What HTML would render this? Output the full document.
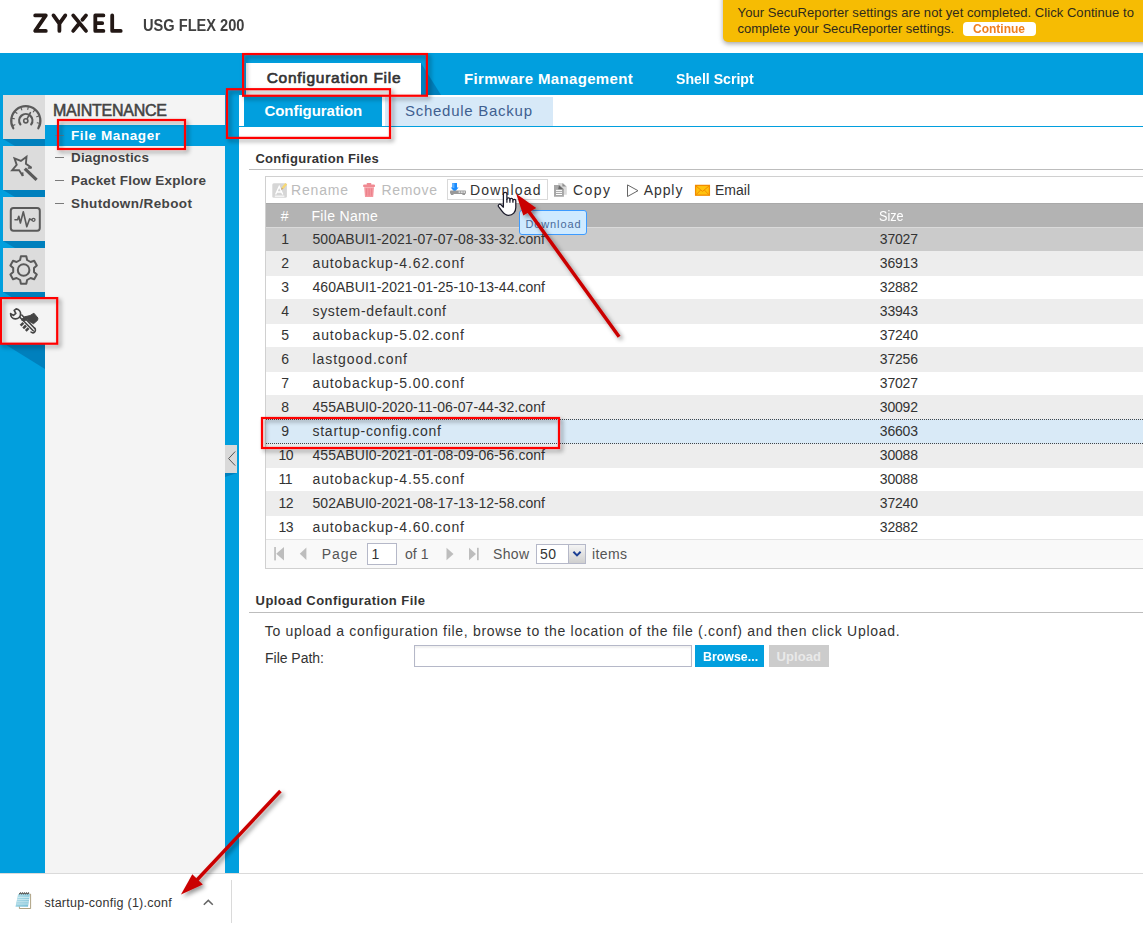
<!DOCTYPE html>
<html><head><meta charset="utf-8"><title>ZyXEL USG FLEX 200</title>
<style>
html,body{margin:0;padding:0;background:#fff;}
body{font-family:"Liberation Sans",sans-serif;overflow:hidden;}
#page{position:relative;width:1143px;height:929px;overflow:hidden;background:#fff;}
#page div,#page svg{position:absolute;}
.t{position:absolute;white-space:pre;line-height:20px;height:20px;}

</style></head>
<body>
<div id="page">
<div style="left:0px;top:53px;width:1143px;height:42px;background:#019fde;"></div>
<div style="left:0px;top:95px;width:45px;height:778px;background:#019fde;"></div>
<div style="left:45px;top:95px;width:180px;height:778px;background:#f4f4f4;"></div>
<div style="left:225px;top:95px;width:14px;height:778px;background:#019fde;"></div>
<svg style="left:30px;top:10px" width="100" height="28" viewBox="30 10 100 28" fill="none" stroke="#231815" stroke-width="3.8" stroke-linecap="round" stroke-linejoin="round">
<path d="M35.2 15.4H45.8L35.2 30.9H45.8"/>
<path d="M53.5 15.4L59.4 23.6L65.3 15.4M59.4 23.6V30.9"/>
<path d="M73.2 15.4L86 30.9M73.2 30.9L78.6 24.3"/>
<path d="M86 15.4L82.4 19.8"/>
<path d="M103.4 15.4H95.3V30.9H103.4M95.3 23.15H102.2"/>
<path d="M112.2 15.4V30.9H120.7"/>
</svg>
<div style="left:723px;top:-6px;width:426px;height:48.3px;background:#f6bc03;border-radius:0 0 0 5px;box-shadow:0 2px 5px rgba(0,0,0,.35);"></div>
<div style="left:963px;top:22px;width:73px;height:14px;background:#fff;border-radius:4px;"></div>
<svg style="left:421px;top:63px" width="22" height="32"><path d="M0 0L20 32H0Z" fill="#0080bd"/></svg>
<div style="left:245.6px;top:62.8px;width:175.4px;height:33.2px;background:#fff;"></div>
<div style="left:239px;top:126px;width:904px;height:1px;background:#019fde;"></div>
<div style="left:244px;top:96px;width:138px;height:30px;background:#019fde;"></div>
<div style="left:385px;top:97px;width:168px;height:29px;background:#d7e9f8;"></div>
<svg style="left:3px;top:139px" width="42" height="7"><path d="M0 0H42V7H12Z" fill="#0080bd"/></svg>
<div style="left:3.4px;top:95.2px;width:41.6px;height:43.7px;background:#dcdcdc;"></div>
<svg style="left:3px;top:190px" width="42" height="7"><path d="M0 0H42V7H12Z" fill="#0080bd"/></svg>
<div style="left:3.4px;top:146.2px;width:41.6px;height:43.7px;background:#dcdcdc;"></div>
<svg style="left:3px;top:241px" width="42" height="7"><path d="M0 0H42V7H12Z" fill="#0080bd"/></svg>
<div style="left:3.4px;top:197.2px;width:41.6px;height:43.7px;background:#dcdcdc;"></div>
<svg style="left:3px;top:292px" width="42" height="7"><path d="M0 0H42V7H12Z" fill="#0080bd"/></svg>
<div style="left:3.4px;top:248.2px;width:41.6px;height:43.7px;background:#dcdcdc;"></div>
<svg style="left:3px;top:343px" width="42" height="27"><path d="M0 0H42V26Z" fill="#0080bd"/></svg>
<div style="left:2px;top:299px;width:43px;height:44px;background:#f4f4f4;"></div>
<div style="left:45px;top:125px;width:194px;height:21px;background:#019fde;"></div>
<div style="left:55px;top:135px;width:9px;height:1px;background:#4f7f96;"></div>
<div style="left:55px;top:157px;width:9px;height:1px;background:#7a7a7a;"></div>
<div style="left:55px;top:180px;width:9px;height:1px;background:#7a7a7a;"></div>
<div style="left:55px;top:203px;width:9px;height:1px;background:#7a7a7a;"></div>
<svg style="left:225px;top:473px" width="12" height="5"><path d="M0 0H12L0 4Z" fill="#0080bd"/></svg>
<div style="left:225px;top:445px;width:12px;height:28px;background:#d9d9d9;"></div>
<svg style="left:225px;top:445px" width="12" height="28"><path d="M10.2 6.5L3.6 13.6L10.2 20.6" fill="none" stroke="#555" stroke-width="1"/></svg>
<div style="left:249px;top:169px;width:894px;height:1px;background:#bdbdbd;"></div>
<div style="left:249px;top:612px;width:894px;height:1px;background:#bdbdbd;"></div>
<div style="left:265px;top:176px;width:880px;height:393px;background:#fff;border:1px solid #d0d0d0;box-sizing:border-box;"></div>
<div style="left:266px;top:540px;width:877px;height:28px;background:#f9f9f9;"></div>
<div style="left:266px;top:203.3px;width:877px;height:23.7px;background:#b3b3b3;"></div>
<div style="left:266px;top:227px;width:877px;height:24px;background:#cbcbcb;"></div>
<div style="left:266px;top:251px;width:877px;height:24px;background:#ededed;"></div>
<div style="left:266px;top:275px;width:877px;height:24px;background:#fff;border-top:1px solid #ededed;box-sizing:border-box;"></div>
<div style="left:266px;top:299px;width:877px;height:24px;background:#ededed;"></div>
<div style="left:266px;top:323px;width:877px;height:24px;background:#fff;border-top:1px solid #ededed;box-sizing:border-box;"></div>
<div style="left:266px;top:347px;width:877px;height:24px;background:#ededed;"></div>
<div style="left:266px;top:371px;width:877px;height:24px;background:#fff;border-top:1px solid #ededed;box-sizing:border-box;"></div>
<div style="left:266px;top:395px;width:877px;height:24px;background:#ededed;"></div>
<div style="left:266px;top:443px;width:877px;height:24px;background:#ededed;"></div>
<div style="left:266px;top:467px;width:877px;height:24px;background:#fff;border-top:1px solid #ededed;box-sizing:border-box;"></div>
<div style="left:266px;top:491px;width:877px;height:24px;background:#ededed;"></div>
<div style="left:266px;top:515px;width:877px;height:24px;background:#fff;border-top:1px solid #ededed;box-sizing:border-box;"></div>
<div style="left:266px;top:203.2px;width:877px;height:1.2px;background:#a9a9a9;"></div>
<div style="left:266px;top:226.6px;width:877px;height:1.2px;background:#dadada;"></div>
<div style="left:266px;top:419px;width:877px;height:25px;background:#d9eaf7;border-top:1px dotted #444;border-bottom:1px dotted #444;box-sizing:border-box;"></div>
<div style="left:266px;top:539px;width:877px;height:1px;background:#e3e3e3;"></div>
<div style="left:447.3px;top:179.4px;width:100.5px;height:21.1px;background:#fff;border:1px solid #d9d9d9;box-sizing:border-box;"></div>
<div style="left:367px;top:543.4px;width:29.6px;height:21.4px;background:#fff;border:1px solid #b5b8c8;box-sizing:border-box;"></div>
<div style="left:536px;top:544.3px;width:50px;height:19.5px;background:#fff;border:1px solid #b5b8c8;box-sizing:border-box;"></div>
<div style="left:568px;top:545.3px;width:17px;height:17.5px;background:linear-gradient(#f4f4f4,#cfcfcf);border-left:1px solid #b5b8c8;box-sizing:border-box;"></div>
<svg style="left:568px;top:545px" width="17" height="18"><path d="M5.4 6.8L9 10.4L12.6 6.8" fill="none" stroke="#1c3f94" stroke-width="2"/></svg>
<svg style="left:270px;top:545px" width="215" height="18" fill="#bdbdbd">
<rect x="4.2" y="2" width="1.7" height="13.4"/><path d="M14 2V15.4L6.2 8.7Z"/>
<path d="M36.4 2.5V15L29.8 8.7Z"/>
<path d="M176.5 2.8V15.2L183.5 9Z"/>
<path d="M199 2.8V15.2L206 9Z"/><rect x="207" y="2.8" width="1.7" height="12.4"/>
</svg>
<div style="left:414px;top:645px;width:278px;height:22px;background:#fff;border:1px solid #b5b8c8;box-sizing:border-box;box-shadow:inset 0 2px 2px rgba(0,0,0,.06);"></div>
<div style="left:695px;top:645px;width:69px;height:22px;background:#019fde;"></div>
<div style="left:769px;top:645px;width:60px;height:22px;background:#cccccc;"></div>
<div style="left:0px;top:873px;width:1143px;height:1px;background:#dadada;"></div>
<div style="left:231px;top:880px;width:1px;height:43px;background:#dadada;"></div>
<svg style="left:202px;top:897px" width="13" height="10"><path d="M1.8 7.8L6.3 3.4L10.8 7.8" fill="none" stroke="#666" stroke-width="1.5"/></svg>
<div style="left:519px;top:210.2px;width:68px;height:25.3px;background:#cfeaff;border:1px solid #3d9bff;border-radius:3px;box-sizing:border-box;"></div>
<svg style="left:0;top:95px" width="45" height="44" viewBox="0 95 45 44" fill="none" stroke="#5a5a5a" stroke-width="2.2" stroke-linecap="round"><path d="M13.3 128.3A14.6 14.6 0 1 1 38.3 128.3"/><path d="M20.4 124.4A6.6 6.6 0 1 1 31.2 124.4"/><circle cx="25.8" cy="120.8" r="2.1" stroke-width="1.6"/><path d="M27.2 118.6L30.4 112.6" stroke-width="1.6"/><path d="M13.0 125.5L14.9 124.8" stroke-width="1.1"/><path d="M12.4 118.4L14.4 118.8" stroke-width="1.1"/><path d="M15.4 112.1L16.9 113.3" stroke-width="1.1"/><path d="M21.1 108.0L21.8 109.9" stroke-width="1.1"/><path d="M28.2 107.4L27.8 109.4" stroke-width="1.1"/><path d="M34.5 110.4L33.3 111.9" stroke-width="1.1"/><path d="M38.6 116.1L36.7 116.8" stroke-width="1.1"/><path d="M39.2 123.2L37.2 122.8" stroke-width="1.1"/></svg>
<svg style="left:0;top:146px" width="45" height="44" viewBox="0 146 45 44" fill="none" stroke="#5a5a5a" stroke-linejoin="miter"><path d="M22.8 176.0L19.1 170.1L12.2 170.2L16.7 164.9L14.5 158.3L20.9 160.9L26.5 156.8L25.9 163.7L31.6 167.8" stroke-width="1.9"/><path d="M22.8 176.0L22.5 172.4M31.6 167.8L27.8 168.0" stroke-width="1.7"/><path d="M24.8 168.6L36.6 179.8" stroke-width="3.2"/></svg>
<svg style="left:0;top:197px" width="45" height="44" viewBox="0 197 45 44" fill="none" stroke="#5a5a5a" stroke-linejoin="round" stroke-linecap="round"><rect x="10.8" y="208.1" width="29" height="22.6" rx="2.6" stroke-width="2"/><path d="M15 219.8H17.6L18.8 216.2L20.4 223L23.3 211.8L26.8 226.8L29.6 218.9L31.6 219.8" stroke-width="1.6"/><circle cx="33.5" cy="219.8" r="1.5" stroke-width="1.3"/></svg>
<svg style="left:0;top:248px" width="45" height="44" viewBox="0 248 45 44" fill="none" stroke="#5a5a5a" stroke-width="2" stroke-linejoin="round"><path d="M27.1 260.0L26.3 256.3L20.9 256.3L20.1 260.0L16.6 262.0L13.0 260.8L10.4 265.4L13.2 268.0L13.2 272.0L10.4 274.6L13.0 279.2L16.6 278.0L20.1 280.0L20.9 283.7L26.3 283.7L27.1 280.0L30.6 278.0L34.2 279.2L36.8 274.6L34.0 272.0L34.0 268.0L36.8 265.4L34.2 260.8L30.6 262.0Z"/><circle cx="23.6" cy="270.0" r="5.8"/></svg>
<svg style="left:0;top:299px" width="45" height="44" viewBox="0 299 45 44" fill="none" stroke="#454545" stroke-linecap="round" stroke-linejoin="round"><path d="M16.2 308.9A5 5 0 1 1 10.6 313.6L13.4 315.4L15.8 313.4L14.2 310.4Z" stroke-width="1.7"/><path d="M19.6 317L33.2 330.8" stroke-width="1.6"/><path d="M21.8 315L34.6 328.2" stroke-width="1.6"/><path d="M34.6 328.2A2.4 2.4 0 1 1 31 332" stroke-width="1.6"/><path d="M21.5 319.6L24.6 316.8L30 315.6L33.9 313.2L37.9 318L37.6 320.2L33.6 323.7L30.6 322.2L27.5 319.6L24 320.8Z" fill="#454545" stroke-width="1"/><path d="M20.6 325.7L23.4 322.9" stroke-width="2.5" stroke-linecap="butt"/><path d="M23.2 328.3L26.0 325.5" stroke-width="2.5" stroke-linecap="butt"/><path d="M25.8 330.9L28.6 328.1" stroke-width="2.5" stroke-linecap="butt"/></svg>
<svg style="left:270px;top:181px" width="20" height="20" viewBox="270 181 20 20">
<rect x="272.3" y="183.2" width="14.6" height="14.6" rx="1.6" fill="#d6d6d6"/>
<path d="M275.6 194.6L279.2 186.4L282.8 194.6M276.9 192H281.5" fill="none" stroke="#fff" stroke-width="1.3"/>
<rect x="274.8" y="195.6" width="9.6" height="1.1" fill="#fff"/>
<path d="M281.6 187.4L285.4 183L287.2 184.6L283.4 189Z" fill="#f7d873"/>
<path d="M281.6 187.4L283.4 189L281 189.8Z" fill="#c9a36a"/>
</svg>
<svg style="left:361px;top:181px" width="16" height="18" viewBox="361 181 16 18">
<rect x="366.6" y="183.1" width="4.8" height="2" rx="0.8" fill="#f08a92"/>
<rect x="363.1" y="184.4" width="11.9" height="2.7" rx="1.2" fill="#f08a92"/>
<path d="M364.2 187.2H374L373.2 196.9H365Z" fill="#f4979e"/>
<path d="M366.6 188.4V195.6M369.1 188.4V195.6M371.6 188.4V195.6" stroke="#e97a84" stroke-width="0.8"/>
</svg>
<svg style="left:449px;top:182px" width="18" height="14" viewBox="449 182 18 14">
<path d="M452.3 183.1H457V187.6H458.6L454.65 191.9L450.7 187.6H452.3Z" fill="#1b8cff"/>
<path d="M452.9 183.3H454.4V188H452.9Z" fill="#5fb2ff"/>
<rect x="450" y="190.5" width="16" height="3.4" rx="0.8" fill="#999"/>
<rect x="450.9" y="194" width="2.6" height="0.9" fill="#8d8d8d"/><rect x="462.4" y="194" width="2.6" height="0.9" fill="#8d8d8d"/>
<rect x="458.6" y="191.3" width="1.7" height="1.7" fill="#d9d9d9"/><rect x="461" y="191.3" width="1.7" height="1.7" fill="#d9d9d9"/><rect x="463.4" y="191.3" width="1.7" height="1.7" fill="#d9d9d9"/>
</svg>
<svg style="left:553px;top:182px" width="16" height="16" viewBox="553 182 16 16">
<path d="M558.1 183H563.2L566.8 186.4V194.8H558.1Z" fill="#dadada"/>
<path d="M562.4 183.2L566.2 186.6H562.4Z" fill="#8f8f8f"/>
<path d="M554 185.1H559.6L563.9 189V196.8H554Z" fill="#a7a7a7"/>
<path d="M559 185.4L563.4 189.2H558.2Z" fill="#666"/>
<path d="M556 190.4H562M556 192.4H562M556 194.5H562" stroke="#fff" stroke-width="1"/>
</svg>
<svg style="left:625px;top:182px" width="16" height="17" viewBox="625 182 16 17">
<path d="M627.5 184.9V196.5L638 190.7Z" fill="none" stroke="#666" stroke-width="1"/>
</svg>
<svg style="left:694px;top:183px" width="18" height="14" viewBox="694 183 18 14">
<rect x="695.6" y="185.4" width="13.8" height="9.8" fill="#ffc20e" stroke="#f28c00" stroke-width="1.3"/>
<path d="M696 186L702.5 191.4L709 186M696 194.8L700.6 190M709 194.8L704.4 190" fill="none" stroke="#f28c00" stroke-width="1"/>
</svg>
<svg style="left:13px;top:890px" width="22" height="22" viewBox="13 890 22 22">
<defs><linearGradient id="np" x1="0" y1="0" x2="1" y2="1"><stop offset="0" stop-color="#b9e2ec"/><stop offset="1" stop-color="#74bcd4"/></linearGradient></defs>
<path d="M19.4 894.2H30.6V908.5H19.4Z" fill="#fff" stroke="#8d7b4f" stroke-width="0.7"/>
<path d="M18.1 894H30L28 906.7H15.5Z" fill="url(#np)"/>
<path d="M17.6 897.4H29.4M17.2 899.6H29M16.8 901.8H28.7M16.4 904H28.4" stroke="#e3f3f7" stroke-width="0.7"/>
<path d="M19.6 893.9L20.6 892.9M21.6 893.9L22.6 892.9M23.6 893.9L24.6 892.9M25.6 893.9L26.6 892.9M27.6 893.9L28.6 892.9" stroke="#333" stroke-width="1.1" stroke-linecap="round"/>
</svg>
<span class="t" style="left:143.0px;top:15.9px;font-size:16px;font-weight:700;color:#404040;letter-spacing:0.000px;transform:scaleX(0.9131);transform-origin:0 50%;">USG FLEX 200</span>
<span class="t" style="left:737.6px;top:2.9px;font-size:13px;font-weight:400;color:#2f2a1c;letter-spacing:0.057px;">Your SecuReporter settings are not yet completed. Click Continue to</span>
<span class="t" style="left:737.6px;top:18.5px;font-size:13px;font-weight:400;color:#2f2a1c;letter-spacing:-0.031px;">complete your SecuReporter settings.</span>
<span class="t" style="left:973.0px;top:18.5px;font-size:13px;font-weight:700;color:#f07f1e;letter-spacing:0.000px;transform:scaleX(0.9232);transform-origin:0 50%;">Continue</span>
<span class="t" style="left:266.7px;top:67.8px;font-size:15.5px;font-weight:400;color:#333;letter-spacing:0.730px;-webkit-text-stroke:0.65px #333;">Configuration File</span>
<span class="t" style="left:464.0px;top:69.3px;font-size:15px;font-weight:700;color:#fff;letter-spacing:0.342px;">Firmware Management</span>
<span class="t" style="left:675.8px;top:69.3px;font-size:15px;font-weight:700;color:#fff;letter-spacing:0.000px;transform:scaleX(0.9415);transform-origin:0 50%;">Shell Script</span>
<span class="t" style="left:264.4px;top:100.8px;font-size:15px;font-weight:700;color:#fff;letter-spacing:-0.036px;">Configuration</span>
<span class="t" style="left:405.0px;top:100.8px;font-size:15px;font-weight:400;color:#3f5f90;letter-spacing:0.732px;">Schedule Backup</span>
<span class="t" style="left:53.0px;top:100.7px;font-size:16px;font-weight:400;color:#444;letter-spacing:-0.245px;-webkit-text-stroke:0.55px #444;">MAINTENANCE</span>
<span class="t" style="left:71.0px;top:125.5px;font-size:13.5px;font-weight:700;color:#fff;letter-spacing:0.588px;">File Manager</span>
<span class="t" style="left:71.0px;top:147.6px;font-size:13.5px;font-weight:700;color:#444;letter-spacing:0.147px;">Diagnostics</span>
<span class="t" style="left:71.0px;top:170.6px;font-size:13.5px;font-weight:700;color:#444;letter-spacing:0.206px;">Packet Flow Explore</span>
<span class="t" style="left:71.0px;top:193.5px;font-size:13.5px;font-weight:700;color:#444;letter-spacing:0.394px;">Shutdown/Reboot</span>
<span class="t" style="left:255.4px;top:148.7px;font-size:13px;font-weight:700;color:#333;letter-spacing:0.275px;">Configuration Files</span>
<span class="t" style="left:255.6px;top:591.4px;font-size:13px;font-weight:700;color:#333;letter-spacing:0.438px;">Upload Configuration File</span>
<span class="t" style="left:291.0px;top:180.0px;font-size:14px;font-weight:400;color:#bbb;letter-spacing:0.816px;">Rename</span>
<span class="t" style="left:381.5px;top:180.0px;font-size:14px;font-weight:400;color:#bbb;letter-spacing:0.672px;">Remove</span>
<span class="t" style="left:470.0px;top:180.0px;font-size:14px;font-weight:400;color:#333;letter-spacing:1.176px;">Download</span>
<span class="t" style="left:573.0px;top:180.0px;font-size:14px;font-weight:400;color:#333;letter-spacing:1.438px;">Copy</span>
<span class="t" style="left:643.7px;top:180.0px;font-size:14px;font-weight:400;color:#333;letter-spacing:0.917px;">Apply</span>
<span class="t" style="left:715.0px;top:180.0px;font-size:14px;font-weight:400;color:#333;letter-spacing:-0.004px;">Email</span>
<span class="t" style="left:280.7px;top:206.1px;font-size:14px;font-weight:400;color:#fff;letter-spacing:0.503px;">#</span>
<span class="t" style="left:311.4px;top:206.1px;font-size:14px;font-weight:400;color:#fff;letter-spacing:0.325px;">File Name</span>
<span class="t" style="left:879.0px;top:206.1px;font-size:14px;font-weight:400;color:#fff;letter-spacing:0.000px;transform:scaleX(0.9033);transform-origin:0 50%;">Size</span>
<span class="t" style="left:281.3px;top:229.1px;font-size:14px;font-weight:400;color:#333;letter-spacing:0.000px;">1</span>
<span class="t" style="left:312.5px;top:229.1px;font-size:14px;font-weight:400;color:#333;letter-spacing:0.042px;">500ABUI1-2021-07-07-08-33-32.conf</span>
<span class="t" style="left:879.8px;top:229.1px;font-size:14px;font-weight:400;color:#333;letter-spacing:-0.184px;">37027</span>
<span class="t" style="left:281.3px;top:253.1px;font-size:14px;font-weight:400;color:#333;letter-spacing:0.000px;">2</span>
<span class="t" style="left:312.5px;top:253.1px;font-size:14px;font-weight:400;color:#333;letter-spacing:0.887px;">autobackup-4.62.conf</span>
<span class="t" style="left:879.8px;top:253.1px;font-size:14px;font-weight:400;color:#333;letter-spacing:-0.184px;">36913</span>
<span class="t" style="left:281.3px;top:277.1px;font-size:14px;font-weight:400;color:#333;letter-spacing:0.000px;">3</span>
<span class="t" style="left:312.5px;top:277.1px;font-size:14px;font-weight:400;color:#333;letter-spacing:0.042px;">460ABUI1-2021-01-25-10-13-44.conf</span>
<span class="t" style="left:879.8px;top:277.1px;font-size:14px;font-weight:400;color:#333;letter-spacing:-0.184px;">32882</span>
<span class="t" style="left:281.3px;top:301.1px;font-size:14px;font-weight:400;color:#333;letter-spacing:0.000px;">4</span>
<span class="t" style="left:312.5px;top:301.1px;font-size:14px;font-weight:400;color:#333;letter-spacing:0.673px;">system-default.conf</span>
<span class="t" style="left:879.8px;top:301.1px;font-size:14px;font-weight:400;color:#333;letter-spacing:-0.184px;">33943</span>
<span class="t" style="left:281.3px;top:325.1px;font-size:14px;font-weight:400;color:#333;letter-spacing:0.000px;">5</span>
<span class="t" style="left:312.5px;top:325.1px;font-size:14px;font-weight:400;color:#333;letter-spacing:0.887px;">autobackup-5.02.conf</span>
<span class="t" style="left:879.8px;top:325.1px;font-size:14px;font-weight:400;color:#333;letter-spacing:-0.184px;">37240</span>
<span class="t" style="left:281.3px;top:349.1px;font-size:14px;font-weight:400;color:#333;letter-spacing:0.000px;">6</span>
<span class="t" style="left:312.5px;top:349.1px;font-size:14px;font-weight:400;color:#333;letter-spacing:0.934px;">lastgood.conf</span>
<span class="t" style="left:879.8px;top:349.1px;font-size:14px;font-weight:400;color:#333;letter-spacing:-0.184px;">37256</span>
<span class="t" style="left:281.3px;top:373.1px;font-size:14px;font-weight:400;color:#333;letter-spacing:0.000px;">7</span>
<span class="t" style="left:312.5px;top:373.1px;font-size:14px;font-weight:400;color:#333;letter-spacing:0.887px;">autobackup-5.00.conf</span>
<span class="t" style="left:879.8px;top:373.1px;font-size:14px;font-weight:400;color:#333;letter-spacing:-0.184px;">37027</span>
<span class="t" style="left:281.3px;top:397.1px;font-size:14px;font-weight:400;color:#333;letter-spacing:0.000px;">8</span>
<span class="t" style="left:312.5px;top:397.1px;font-size:14px;font-weight:400;color:#333;letter-spacing:0.074px;">455ABUI0-2020-11-06-07-44-32.conf</span>
<span class="t" style="left:879.8px;top:397.1px;font-size:14px;font-weight:400;color:#333;letter-spacing:-0.184px;">30092</span>
<span class="t" style="left:281.3px;top:421.1px;font-size:14px;font-weight:400;color:#333;letter-spacing:0.000px;">9</span>
<span class="t" style="left:312.5px;top:421.1px;font-size:14px;font-weight:400;color:#333;letter-spacing:0.740px;">startup-config.conf</span>
<span class="t" style="left:879.8px;top:421.1px;font-size:14px;font-weight:400;color:#333;letter-spacing:-0.184px;">36603</span>
<span class="t" style="left:278.6px;top:445.1px;font-size:14px;font-weight:400;color:#333;letter-spacing:0.000px;letter-spacing:-0.6px;">10</span>
<span class="t" style="left:312.5px;top:445.1px;font-size:14px;font-weight:400;color:#333;letter-spacing:0.042px;">455ABUI0-2021-01-08-09-06-56.conf</span>
<span class="t" style="left:879.8px;top:445.1px;font-size:14px;font-weight:400;color:#333;letter-spacing:-0.184px;">30088</span>
<span class="t" style="left:278.6px;top:469.1px;font-size:14px;font-weight:400;color:#333;letter-spacing:0.000px;letter-spacing:-0.6px;">11</span>
<span class="t" style="left:312.5px;top:469.1px;font-size:14px;font-weight:400;color:#333;letter-spacing:0.887px;">autobackup-4.55.conf</span>
<span class="t" style="left:879.8px;top:469.1px;font-size:14px;font-weight:400;color:#333;letter-spacing:-0.184px;">30088</span>
<span class="t" style="left:278.6px;top:493.1px;font-size:14px;font-weight:400;color:#333;letter-spacing:0.000px;letter-spacing:-0.6px;">12</span>
<span class="t" style="left:312.5px;top:493.1px;font-size:14px;font-weight:400;color:#333;letter-spacing:0.042px;">502ABUI0-2021-08-17-13-12-58.conf</span>
<span class="t" style="left:879.8px;top:493.1px;font-size:14px;font-weight:400;color:#333;letter-spacing:-0.184px;">37240</span>
<span class="t" style="left:278.6px;top:517.1px;font-size:14px;font-weight:400;color:#333;letter-spacing:0.000px;letter-spacing:-0.6px;">13</span>
<span class="t" style="left:312.5px;top:517.1px;font-size:14px;font-weight:400;color:#333;letter-spacing:0.887px;">autobackup-4.60.conf</span>
<span class="t" style="left:879.8px;top:517.1px;font-size:14px;font-weight:400;color:#333;letter-spacing:-0.184px;">32882</span>
<span class="t" style="left:321.7px;top:543.9px;font-size:14px;font-weight:400;color:#555;letter-spacing:0.999px;">Page</span>
<span class="t" style="left:371.5px;top:543.9px;font-size:14px;font-weight:400;color:#333;letter-spacing:0.000px;">1</span>
<span class="t" style="left:405.0px;top:543.9px;font-size:14px;font-weight:400;color:#555;letter-spacing:0.047px;">of 1</span>
<span class="t" style="left:493.0px;top:543.9px;font-size:14px;font-weight:400;color:#555;letter-spacing:0.323px;">Show</span>
<span class="t" style="left:540.0px;top:543.9px;font-size:14px;font-weight:400;color:#333;letter-spacing:0.422px;">50</span>
<span class="t" style="left:592.0px;top:543.9px;font-size:14px;font-weight:400;color:#555;letter-spacing:0.387px;">items</span>
<span class="t" style="left:264.7px;top:621.3px;font-size:14px;font-weight:400;color:#333;letter-spacing:0.695px;">To upload a configuration file, browse to the location of the file (.conf) and then click Upload.</span>
<span class="t" style="left:265.0px;top:647.6px;font-size:14px;font-weight:400;color:#333;letter-spacing:-0.016px;">File Path:</span>
<span class="t" style="left:702.5px;top:646.7px;font-size:13px;font-weight:700;color:#fff;letter-spacing:0.000px;transform:scaleX(0.9533);transform-origin:0 50%;">Browse...</span>
<span class="t" style="left:776.5px;top:646.7px;font-size:13px;font-weight:700;color:#e9e9e9;letter-spacing:0.087px;">Upload</span>
<span class="t" style="left:525.5px;top:213.9px;font-size:11px;font-weight:400;color:#4a6a9a;letter-spacing:0.868px;">Download</span>
<span class="t" style="left:44.4px;top:893.0px;font-size:12.5px;font-weight:400;color:#333;letter-spacing:0.259px;">startup-config (1).conf</span>
<!--CURSOR--><svg style="left:495px;top:189px" width="24" height="30" viewBox="495 189 24 30">
<path d="M503.4 206.2V194A1.75 1.75 0 0 1 506.9 194V199.4A1.45 1.45 0 0 1 509.9 199.2V200A1.45 1.45 0 0 1 512.9 199.8V200.8A1.45 1.45 0 0 1 515.8 200.8V207.5C515.8 212 512.8 215.4 508.6 215.4C505.6 215.4 503.8 213.6 502 211.2L498.6 206.6A1.5 1.5 0 0 1 500.8 204.6L503.4 207.2Z" fill="#fff" stroke="#1a1a2a" stroke-width="1.25" stroke-linejoin="round"/>
<path d="M506.9 199V202.8M509.9 199.6V202.8M512.9 200.4V202.8" stroke="#1a1a2a" stroke-width="1.2" fill="none"/>
</svg>
<svg style="left:0;top:0" width="1143" height="929" viewBox="0 0 1143 929">
<defs>
<filter id="sh" x="-20%" y="-20%" width="140%" height="140%"><feDropShadow dx="2.5" dy="2.5" stdDeviation="2" flood-color="#000" flood-opacity="0.42"/></filter>
</defs>
<g filter="url(#sh)" fill="none" stroke="#ff0000" stroke-width="2.2">
<rect x="243.1" y="54.05" width="183.8" height="41.7"/>
<rect x="227" y="89.2" width="163" height="48.7"/>
<rect x="58" y="120" width="127" height="29"/>
<rect x="0.9" y="298.1" width="56.3" height="45.6"/>
<rect x="262" y="418" width="297" height="30"/>
</g>
<g filter="url(#sh)" fill="#ca0000" stroke="none">
<path d="M619.1 336.7L527 209" stroke="#ca0000" stroke-width="3.5" fill="none"/>
<path d="M516.2 193.8L523.3 215.5L536.2 208Z"/>
<path d="M280.4 791L196 881" stroke="#ca0000" stroke-width="3.5" fill="none"/>
<path d="M181 894.4L192.3 874.2L202.8 884.4Z"/>
</g>
</svg>

</div>
</body></html>
